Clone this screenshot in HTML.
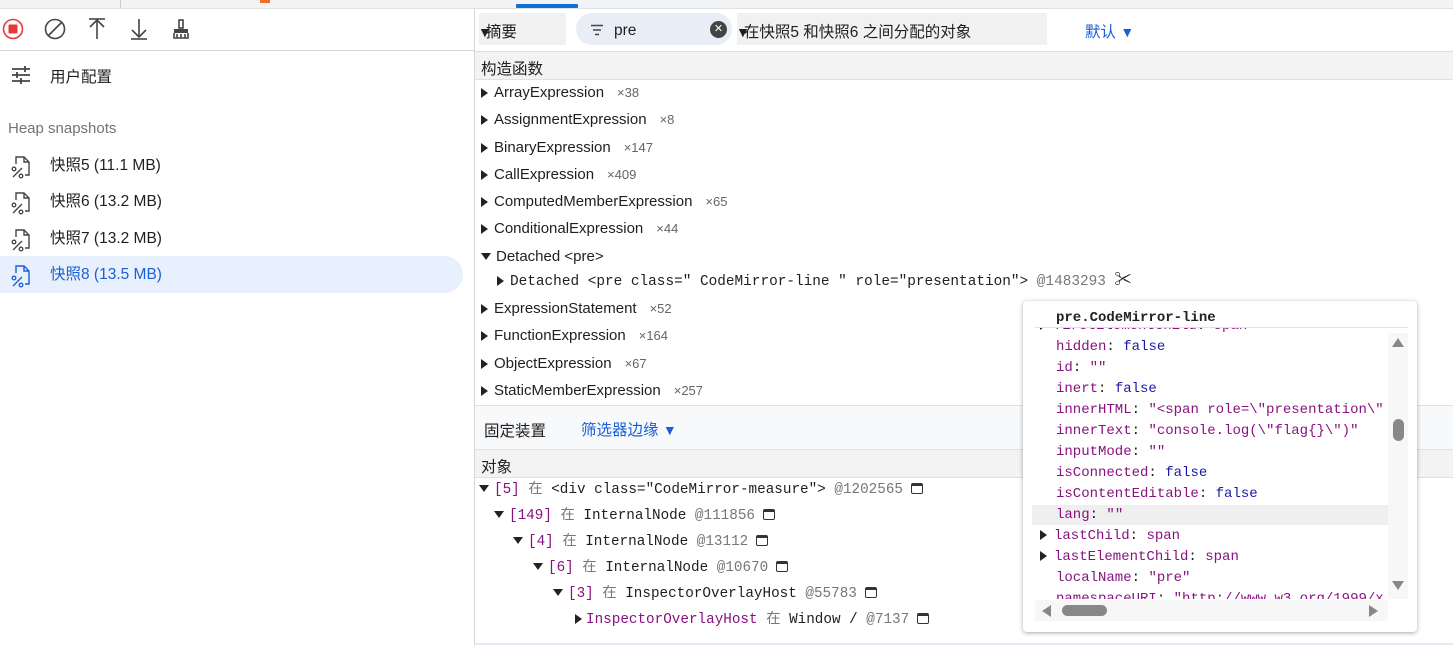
<!DOCTYPE html>
<html><head><meta charset="utf-8"><style>
*{margin:0;padding:0;box-sizing:border-box}
body{width:1453px;height:645px;overflow:hidden;background:#fff;font-family:"Liberation Sans","Noto Sans CJK SC",sans-serif;font-size:14px;color:#1f1f1f;position:relative}
.abs{position:absolute}
.mono{font-family:"Liberation Mono","Noto Sans CJK SC",monospace;font-size:14px}
.row{position:absolute;left:481px;height:20px;line-height:20px;white-space:nowrap;font-size:15px}
.tri{display:inline-block;width:0;height:0;border-top:5px solid transparent;border-bottom:5px solid transparent;border-left:7px solid #222;margin-right:6px;vertical-align:-1px}
.trid{display:inline-block;width:0;height:0;border-left:5px solid transparent;border-right:5px solid transparent;border-top:7px solid #222;margin-right:5px;vertical-align:1px}
.cnt{color:#666;font-size:13px;margin-left:13px}
.pur{color:#881280}
.blu{color:#1a1aa6}
.gry{color:#777}
.tip{font-family:"Liberation Mono",monospace;font-size:14px;position:absolute;left:1056px;white-space:nowrap;line-height:20px}
.snap{position:absolute;left:0;width:463px;height:37px;line-height:37px;font-size:15.5px}
.snap span{position:absolute;left:50px}
.snap svg{position:absolute;left:9px;top:8px}
.win{display:inline-block;width:12px;height:11px;border:1.5px solid #333;border-top-width:3px;border-radius:2px;margin-left:8px;vertical-align:-1px}
</style></head><body>
<div class="abs" style="left:0;top:0;width:1453px;height:9px;background:#f1f3f4;border-bottom:1px solid #e0e0e0"></div>
<div class="abs" style="left:120px;top:0;width:1px;height:8px;background:#ccc"></div>
<div class="abs" style="left:260px;top:0;width:10px;height:3px;background:#f36c2b"></div>
<div class="abs" style="left:516px;top:4px;width:62px;height:4px;background:#0b72d4;border-radius:1px"></div>
<div class="abs" style="left:0;top:50px;width:474px;height:1px;background:#d6d6d6"></div>
<div class="abs" style="left:474px;top:9px;width:1px;height:636px;background:#d6d6d6"></div>
<svg class="abs" style="left:2px;top:18px" width="22" height="22"><circle cx="11" cy="11" r="9.5" fill="none" stroke="#e53935" stroke-width="1.6"/><rect x="6.5" y="6.5" width="9" height="9" fill="#e53935" rx="1"/></svg>
<svg class="abs" style="left:44px;top:18px" width="22" height="22"><circle cx="11" cy="11" r="9.5" fill="none" stroke="#444" stroke-width="1.6"/><line x1="4.5" y1="17.5" x2="17.5" y2="4.5" stroke="#444" stroke-width="1.6"/></svg>
<svg class="abs" style="left:86px;top:17px" width="22" height="24"><line x1="3" y1="2" x2="19" y2="2" stroke="#444" stroke-width="1.6"/><line x1="11" y1="3" x2="11" y2="22" stroke="#444" stroke-width="1.6"/><polyline points="4,10 11,3 18,10" fill="none" stroke="#444" stroke-width="1.6"/></svg>
<svg class="abs" style="left:128px;top:17px" width="22" height="24"><line x1="3" y1="22" x2="19" y2="22" stroke="#444" stroke-width="1.6"/><line x1="11" y1="2" x2="11" y2="20" stroke="#444" stroke-width="1.6"/><polyline points="4,13 11,20 18,13" fill="none" stroke="#444" stroke-width="1.6"/></svg>
<svg class="abs" style="left:170px;top:18px" width="22" height="22"><rect x="9" y="2" width="4" height="8" fill="none" stroke="#444" stroke-width="1.6"/><path d="M4 11 H18 V15 H4 Z" fill="#444"/><path d="M4 15 V20 H18 V15 M7 16 V20 M11 16 V20 M15 16 V20" fill="none" stroke="#444" stroke-width="1.6"/></svg>
<svg class="abs" style="left:10px;top:65px" width="22" height="20"><g stroke="#444" stroke-width="1.8"><line x1="2" y1="4" x2="20" y2="4"/><line x1="2" y1="10" x2="20" y2="10"/><line x1="2" y1="16" x2="20" y2="16"/><line x1="15" y1="1" x2="15" y2="7"/><line x1="7" y1="7" x2="7" y2="13"/><line x1="11" y1="13" x2="11" y2="19"/></g></svg>
<div class="abs" style="left:50px;top:65px;font-size:15.5px">用户配置</div>
<div class="abs" style="left:8px;top:120px;font-size:15px;color:#70757a">Heap snapshots</div>
<div class="snap" style="top:147px"><svg width="24" height="24"><path d="M7 9 V2 H15 L20 7 V20 H16" fill="none" stroke="#444" stroke-width="1.4"/><path d="M15 2 V7 H20" fill="none" stroke="#444" stroke-width="1.4"/><circle cx="5" cy="14" r="1.8" fill="none" stroke="#444" stroke-width="1.3"/><circle cx="12" cy="21" r="1.8" fill="none" stroke="#444" stroke-width="1.3"/><line x1="4" y1="22" x2="13" y2="13" stroke="#444" stroke-width="1.3"/></svg><span>快照5 (11.1 MB)</span></div>
<div class="snap" style="top:183px"><svg width="24" height="24"><path d="M7 9 V2 H15 L20 7 V20 H16" fill="none" stroke="#444" stroke-width="1.4"/><path d="M15 2 V7 H20" fill="none" stroke="#444" stroke-width="1.4"/><circle cx="5" cy="14" r="1.8" fill="none" stroke="#444" stroke-width="1.3"/><circle cx="12" cy="21" r="1.8" fill="none" stroke="#444" stroke-width="1.3"/><line x1="4" y1="22" x2="13" y2="13" stroke="#444" stroke-width="1.3"/></svg><span>快照6 (13.2 MB)</span></div>
<div class="snap" style="top:220px"><svg width="24" height="24"><path d="M7 9 V2 H15 L20 7 V20 H16" fill="none" stroke="#444" stroke-width="1.4"/><path d="M15 2 V7 H20" fill="none" stroke="#444" stroke-width="1.4"/><circle cx="5" cy="14" r="1.8" fill="none" stroke="#444" stroke-width="1.3"/><circle cx="12" cy="21" r="1.8" fill="none" stroke="#444" stroke-width="1.3"/><line x1="4" y1="22" x2="13" y2="13" stroke="#444" stroke-width="1.3"/></svg><span>快照7 (13.2 MB)</span></div>
<div class="snap" style="top:256px;background:#e9f0fd;border-radius:0 19px 19px 0;color:#1a5fd6"><svg width="24" height="24"><path d="M7 9 V2 H15 L20 7 V20 H16" fill="none" stroke="#1a5fd6" stroke-width="1.4"/><path d="M15 2 V7 H20" fill="none" stroke="#1a5fd6" stroke-width="1.4"/><circle cx="5" cy="14" r="1.8" fill="none" stroke="#1a5fd6" stroke-width="1.3"/><circle cx="12" cy="21" r="1.8" fill="none" stroke="#1a5fd6" stroke-width="1.3"/><line x1="4" y1="22" x2="13" y2="13" stroke="#1a5fd6" stroke-width="1.3"/></svg><span>快照8 (13.5 MB)</span></div>

<div class="abs" style="left:479px;top:13px;width:87px;height:32px;background:#f1f1f1"></div>
<div class="abs" style="left:478px;top:20px;font-size:15.5px"><span style="font-size:14px;letter-spacing:-6px">▼</span>摘要</div>
<div class="abs" style="left:576px;top:13px;width:156px;height:32px;background:#e9eef6;border-radius:16px"></div>
<svg class="abs" style="left:590px;top:24px" width="14" height="12"><g stroke="#444" stroke-width="1.5"><line x1="1" y1="1.5" x2="13" y2="1.5"/><line x1="3" y1="6" x2="11" y2="6"/><line x1="5" y1="10.5" x2="9" y2="10.5"/></g></svg>
<div class="abs" style="left:614px;top:22px;font-size:15.5px">pre</div>
<div class="abs" style="left:710px;top:21px;width:17px;height:17px;border-radius:50%;background:#444;color:#fff;font-size:11px;line-height:17px;text-align:center">✕</div>
<div class="abs" style="left:737px;top:13px;width:310px;height:32px;background:#f1f1f1"></div>
<div class="abs" style="left:736px;top:20px;font-size:15.5px"><span style="font-size:14px;letter-spacing:-6px">▼</span>在快照5 和快照6 之间分配的对象</div>
<div class="abs" style="left:1085px;top:20px;font-size:15.5px;color:#1a5fd6">默认 <span style="font-size:14px">▼</span></div>
<div class="abs" style="left:475px;top:51px;width:978px;height:29px;background:#f3f3f3;border-top:1px solid #ddd;border-bottom:1px solid #d6e2f5"></div>
<div class="abs" style="left:481px;top:57px;font-size:15.5px">构造函数</div>

<div class="row" style="top:83px"><span class="tri"></span>ArrayExpression<span class="cnt">×38</span></div>
<div class="row" style="top:110px"><span class="tri"></span>AssignmentExpression<span class="cnt">×8</span></div>
<div class="row" style="top:138px"><span class="tri"></span>BinaryExpression<span class="cnt">×147</span></div>
<div class="row" style="top:165px"><span class="tri"></span>CallExpression<span class="cnt">×409</span></div>
<div class="row" style="top:192px"><span class="tri"></span>ComputedMemberExpression<span class="cnt">×65</span></div>
<div class="row" style="top:219px"><span class="tri"></span>ConditionalExpression<span class="cnt">×44</span></div>
<div class="row" style="top:247px"><span class="trid"></span>Detached &lt;pre&gt;</div>
<div class="row mono" style="top:272px;left:497px;font-size:14.4px"><span class="tri"></span>Detached &lt;pre class=" CodeMirror-line " role="presentation"&gt; <span class="gry">@1483293</span> <span style="font-size:17px">✂</span></div>
<div class="row" style="top:299px"><span class="tri"></span>ExpressionStatement<span class="cnt">×52</span></div>
<div class="row" style="top:326px"><span class="tri"></span>FunctionExpression<span class="cnt">×164</span></div>
<div class="row" style="top:354px"><span class="tri"></span>ObjectExpression<span class="cnt">×67</span></div>
<div class="row" style="top:381px"><span class="tri"></span>StaticMemberExpression<span class="cnt">×257</span></div>

<div class="abs" style="left:475px;top:405px;width:978px;height:45px;background:#f8f9fb;border-top:1px solid #d6e2f5;border-bottom:1px solid #d6e2f5"></div>
<div class="abs" style="left:484px;top:419px;font-size:15.5px">固定装置</div>
<div class="abs" style="left:581px;top:418px;font-size:15.5px;color:#1a5fd6">筛选器边缘 <span style="font-size:14px">▼</span></div>
<div class="abs" style="left:475px;top:450px;width:978px;height:28px;background:#f3f3f3;border-bottom:1px solid #d6e2f5"></div>
<div class="abs" style="left:481px;top:455px;font-size:15.5px">对象</div>

<div class="row mono" style="top:480px;left:479px;font-size:14.3px"><span class="trid"></span><span class="pur">[5]</span> <span class="gry">在</span> &lt;div class="CodeMirror-measure"&gt; <span class="gry">@1202565</span><span class="win"></span></div>
<div class="row mono" style="top:506px;left:494px;font-size:14.3px"><span class="trid"></span><span class="pur">[149]</span> <span class="gry">在</span> InternalNode <span class="gry">@111856</span><span class="win"></span></div>
<div class="row mono" style="top:532px;left:513px;font-size:14.3px"><span class="trid"></span><span class="pur">[4]</span> <span class="gry">在</span> InternalNode <span class="gry">@13112</span><span class="win"></span></div>
<div class="row mono" style="top:558px;left:533px;font-size:14.3px"><span class="trid"></span><span class="pur">[6]</span> <span class="gry">在</span> InternalNode <span class="gry">@10670</span><span class="win"></span></div>
<div class="row mono" style="top:584px;left:553px;font-size:14.3px"><span class="trid"></span><span class="pur">[3]</span> <span class="gry">在</span> InspectorOverlayHost <span class="gry">@55783</span><span class="win"></span></div>
<div class="row mono" style="top:610px;left:575px;font-size:14.3px"><span class="tri" style="margin-right:4px"></span><span class="pur">InspectorOverlayHost</span> <span class="gry">在</span> Window /  <span class="gry">@7137</span><span class="win"></span></div>
<div class="abs" style="left:475px;top:643px;width:978px;height:2px;background:#e3ebf7"></div>

<div class="abs" style="left:1023px;top:301px;width:394px;height:331px;background:#fff;border-radius:4px;box-shadow:0 1px 4px rgba(0,0,0,.35)"></div>
<div class="abs" style="left:1036px;top:328px;width:352px;height:8px;overflow:hidden">
 <div class="tip" style="left:4px;top:-12px"><span class="tri" style="margin-right:7px"></span><span class="pur">firstElementChild</span>: <span class="pur">span</span></div>
</div>
<div class="abs" style="left:1035px;top:327px;width:373px;height:1px;background:#d6e2f5"></div>
<div class="tip" style="top:308px;font-weight:bold;color:#222">pre.CodeMirror-line</div>
<div class="tip" style="top:337px"><span class="pur">hidden</span>: <span class="blu">false</span></div>
<div class="tip" style="top:358px"><span class="pur">id</span>: <span class="pur">""</span></div>
<div class="tip" style="top:379px"><span class="pur">inert</span>: <span class="blu">false</span></div>
<div class="abs" style="left:1036px;top:400px;width:352px;height:21px;overflow:hidden"><div class="tip" style="left:20px;top:0"><span class="pur">innerHTML</span>: <span class="pur">"&lt;span role=\"presentation\"</span></div></div>
<div class="tip" style="top:421px"><span class="pur">innerText</span>: <span class="pur">"console.log(\"flag{}\")"</span></div>
<div class="tip" style="top:442px"><span class="pur">inputMode</span>: <span class="pur">""</span></div>
<div class="tip" style="top:463px"><span class="pur">isConnected</span>: <span class="blu">false</span></div>
<div class="tip" style="top:484px"><span class="pur">isContentEditable</span>: <span class="blu">false</span></div>
<div class="abs" style="left:1032px;top:505px;width:356px;height:20px;background:#efefef"></div>
<div class="tip" style="top:505px"><span class="pur">lang</span>: <span class="pur">""</span></div>
<div class="tip" style="top:526px;left:1040px"><span class="tri" style="margin-right:7px"></span><span class="pur">lastChild</span>: <span class="pur">span</span></div>
<div class="tip" style="top:547px;left:1040px"><span class="tri" style="margin-right:7px"></span><span class="pur">lastElementChild</span>: <span class="pur">span</span></div>
<div class="tip" style="top:568px"><span class="pur">localName</span>: <span class="pur">"pre"</span></div>
<div class="abs" style="left:1036px;top:589px;width:352px;height:10px;overflow:hidden"><div class="tip" style="left:20px;top:0"><span class="pur">namespaceURI</span>: <span class="pur">"http://www.w3.org/1999/x</span></div></div>
<div class="abs" style="left:1388px;top:333px;width:20px;height:266px;background:#f7f7f7"></div>
<div class="abs" style="left:1392px;top:338px;width:0;height:0;border-left:6px solid transparent;border-right:6px solid transparent;border-bottom:9px solid #888"></div>
<div class="abs" style="left:1392px;top:581px;width:0;height:0;border-left:6px solid transparent;border-right:6px solid transparent;border-top:9px solid #888"></div>
<div class="abs" style="left:1393px;top:419px;width:11px;height:22px;background:#888;border-radius:6px"></div>
<div class="abs" style="left:1035px;top:600px;width:353px;height:21px;background:#f7f7f7"></div>
<div class="abs" style="left:1042px;top:605px;width:0;height:0;border-top:6px solid transparent;border-bottom:6px solid transparent;border-right:9px solid #888"></div>
<div class="abs" style="left:1369px;top:605px;width:0;height:0;border-top:6px solid transparent;border-bottom:6px solid transparent;border-left:9px solid #888"></div>
<div class="abs" style="left:1062px;top:605px;width:45px;height:11px;background:#888;border-radius:6px"></div>
</body></html>
